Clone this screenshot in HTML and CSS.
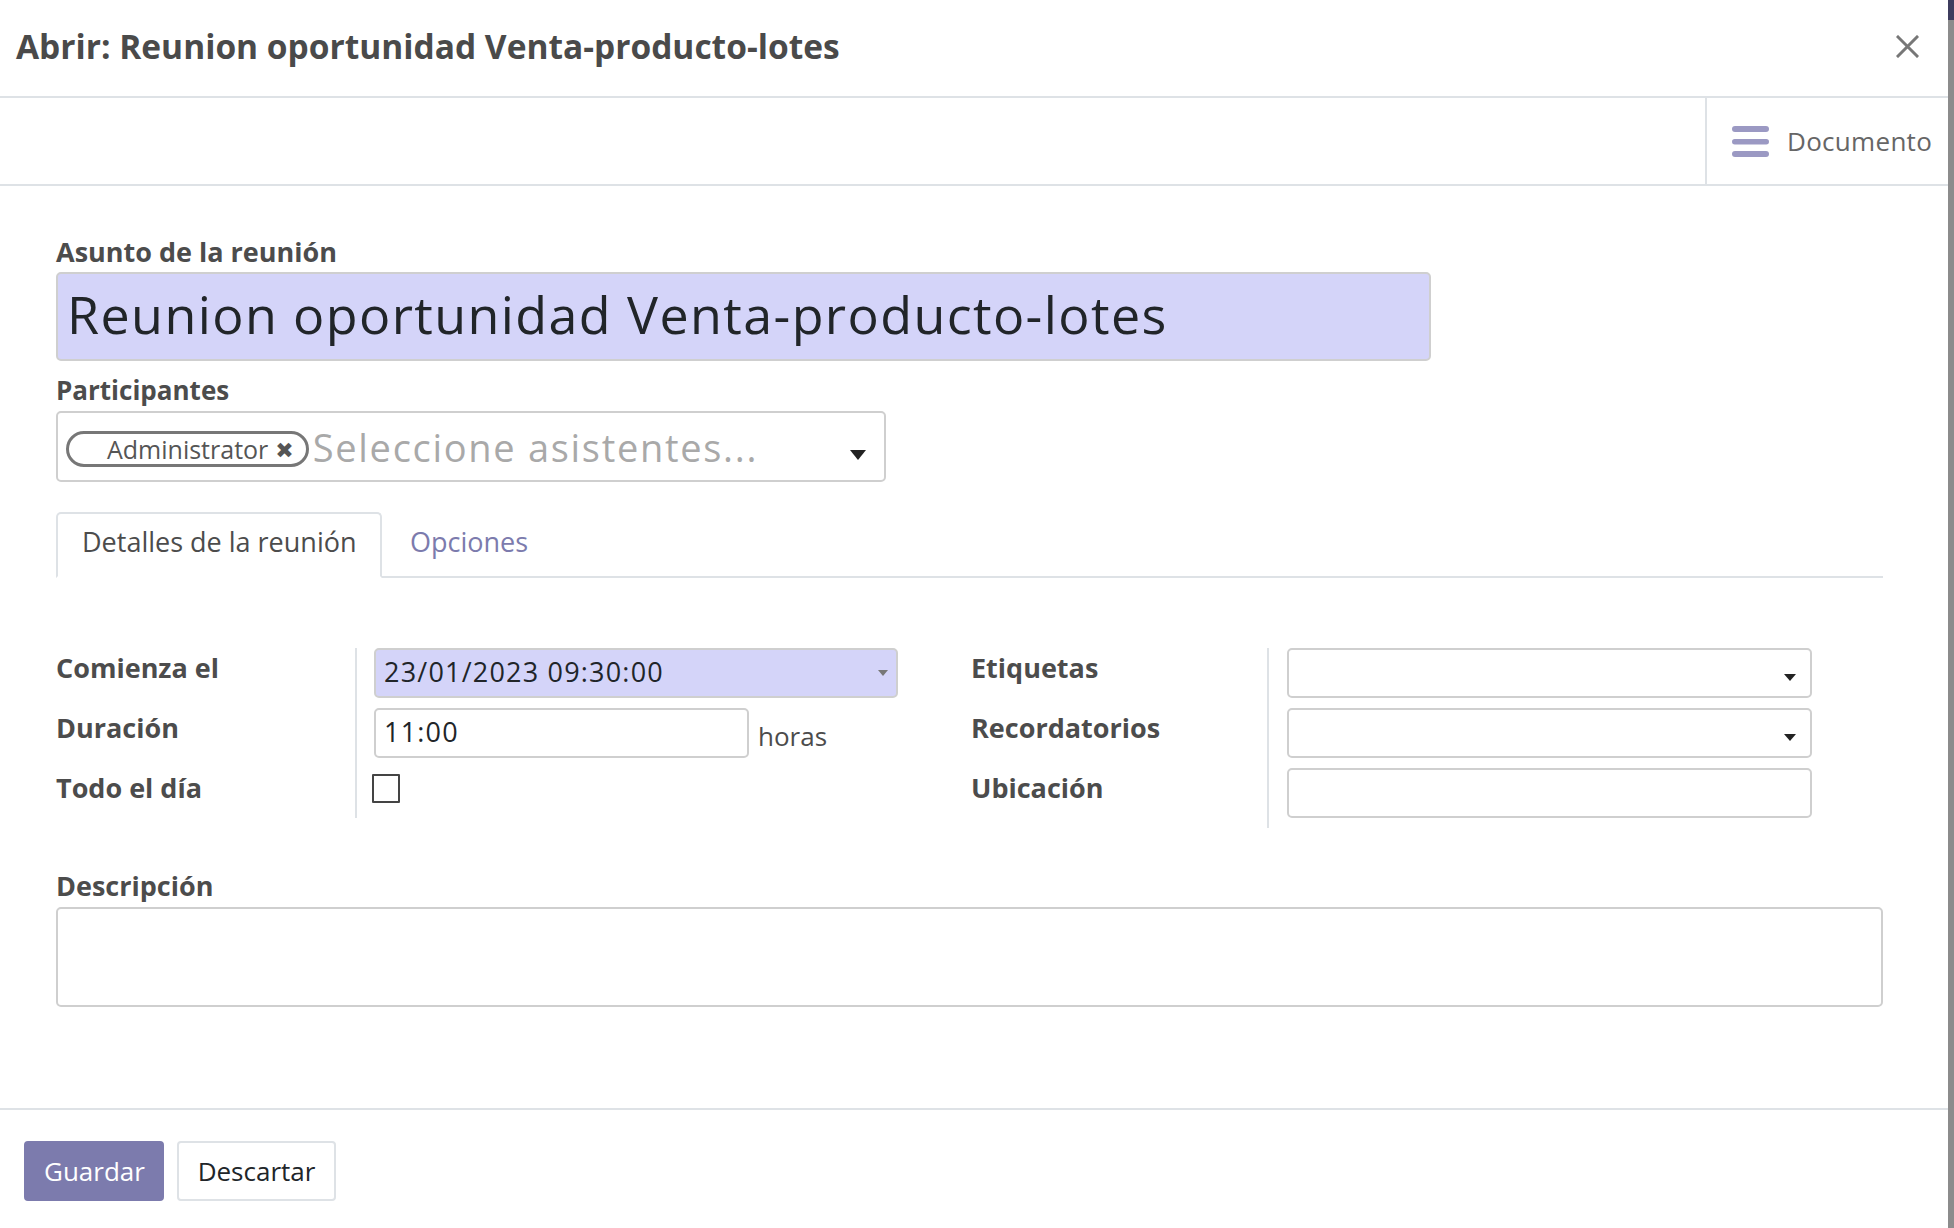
FILE: index.html
```html
<!DOCTYPE html>
<html lang="es">
<head>
<meta charset="utf-8">
<title>Abrir: Reunion oportunidad Venta-producto-lotes</title>
<link rel="stylesheet" href="styles.css">
</head>
<body>
<div class="page">
  <div class="modal">
    <header class="modal-header">
      <h4 class="modal-title">Abrir: Reunion oportunidad Venta-producto-lotes</h4>
      <button class="close" aria-label="Cerrar">
        <svg width="23" height="23" viewBox="0 0 23 23"><path d="M2 2 L21 21 M21 2 L2 21" stroke="#777" stroke-width="3" stroke-linecap="square"/></svg>
      </button>
    </header>
    <div class="control-bar">
      <div class="cp-left"></div>
      <div class="cp-right">
        <svg class="burger" width="37" height="31" viewBox="0 0 37 31"><rect x="0" y="0" width="37" height="6" rx="3" fill="#9b99c3"/><rect x="0" y="13" width="37" height="5.5" rx="2.75" fill="#9b99c3"/><rect x="0" y="25" width="37" height="6" rx="3" fill="#9b99c3"/></svg>
        <span class="doc-label">Documento</span>
      </div>
    </div>
    <main class="modal-body">
      <label class="field-label">Asunto de la reunión</label>
      <div class="input title-input required">Reunion oportunidad Venta-producto-lotes</div>

      <label class="field-label part-label">Participantes</label>
      <div class="input many2many">
        <span class="tag">Administrator <span class="tag-x">✖</span></span>
        <span class="placeholder">Seleccione asistentes...</span>
        <svg class="caret-big" width="16" height="10" viewBox="0 0 16 10"><path d="M0 0 H16 L8 10 Z" fill="#222"/></svg>
      </div>

      <nav class="tabs">
        <div class="tab active">Detalles de la reunión</div>
        <div class="tab">Opciones</div>
      </nav>

      <div class="groups">
        <div class="group">
          <div class="labels">
            <div class="lbl">Comienza el</div>
            <div class="lbl">Duración</div>
            <div class="lbl last">Todo el día</div>
          </div>
          <div class="fields">
            <div class="input small required date-input">23/01/2023 09:30:00
              <svg class="caret-sm" width="10" height="6" viewBox="0 0 10 6"><path d="M0 0 H10 L5 6 Z" fill="#777"/></svg>
            </div>
            <div class="dur-row">
              <div class="input small dur-input">11:00</div>
              <span class="unit">horas</span>
            </div>
            <div class="check-row"><span class="checkbox"></span></div>
          </div>
        </div>
        <div class="group right-group">
          <div class="labels">
            <div class="lbl">Etiquetas</div>
            <div class="lbl">Recordatorios</div>
            <div class="lbl">Ubicación</div>
          </div>
          <div class="fields">
            <div class="input small wide-input"><svg class="caret-md" width="12" height="7" viewBox="0 0 12 7"><path d="M0 0 H12 L6 7 Z" fill="#222"/></svg></div>
            <div class="input small wide-input"><svg class="caret-md" width="12" height="7" viewBox="0 0 12 7"><path d="M0 0 H12 L6 7 Z" fill="#222"/></svg></div>
            <div class="input small wide-input"></div>
          </div>
        </div>
      </div>

      <label class="field-label desc-label">Descripción</label>
      <div class="input textarea"></div>
    </main>
    <footer class="modal-footer">
      <button class="btn btn-primary">Guardar</button>
      <button class="btn btn-secondary">Descartar</button>
    </footer>
  </div>
  <div class="backdrop"></div>
</div>
</body>
</html>
```
FILE: styles.css
```css
* { box-sizing: border-box; }
html, body { margin: 0; padding: 0; }
body {
  font-family: "Open Sans", "Noto Sans", "DejaVu Sans", sans-serif;
  color: #4c4c4c;
  background: #fff;
}
.page {
  display: flex;
  width: 1954px;
  height: 1228px;
  overflow: hidden;
}
.modal {
  width: 1948px;
  height: 1228px;
  display: flex;
  flex-direction: column;
  background: #fff;
}
.backdrop {
  width: 6px;
  height: 1228px;
  background: linear-gradient(#3e3c5e 0, #3e3c5e 20px, #8c8c8c 20px, #8c8c8c 100%);
}

/* header */
.modal-header {
  height: 98px;
  border-bottom: 2px solid #dee2e6;
  display: flex;
  align-items: center;
  justify-content: space-between;
  padding: 0 29px 4px 16px;
}
.modal-title {
  margin: 0;
  font-size: 33.5px;
  font-weight: 700;
  color: #4a4a4a;
}
.close {
  border: 0;
  background: transparent;
  padding: 0;
  width: 23px;
  height: 23px;
  display: flex;
}

/* control bar */
.control-bar {
  height: 88px;
  border-bottom: 2px solid #dee2e6;
  display: flex;
}
.cp-left { flex: 1; }
.cp-right {
  width: 243px;
  border-left: 2px solid #dee2e6;
  display: flex;
  align-items: center;
  padding-left: 25px;
  gap: 18px;
}
.doc-label {
  font-size: 26px;
  color: #666;
  letter-spacing: 0.3px;
}

/* body */
.modal-body {
  flex: 1;
  padding: 48px 65px 0 56px;
  display: flex;
  flex-direction: column;
  align-items: flex-start;
}
.field-label {
  display: block;
  font-size: 27px;
  font-weight: 700;
  line-height: 36px;
  color: #4c4c4c;
}
.input {
  border: 2px solid #cfcfcf;
  border-radius: 5px;
  background: #fff;
  color: #212529;
}
.required { background: #d4d4f9; }
.title-input {
  width: 1375px;
  height: 89px;
  margin-top: 2px;
  font-size: 52px;
  letter-spacing: 1.4px;
  line-height: 80px;
  padding-left: 9px;
}
.part-label { margin-top: 11px; font-size: 26px; }
.many2many {
  width: 830px;
  height: 71px;
  margin-top: 3px;
  display: flex;
  align-items: center;
  padding-left: 8px;
  position: relative;
}
.tag {
  display: inline-flex;
  align-items: center;
  height: 36px;
  border: 3px solid #777;
  border-radius: 18px;
  padding: 0 12px 0 38px;
  font-size: 25px;
  color: #555;
  margin-top: 4px;
}
.tag-x {
  font-size: 22px;
  margin-left: 7px;
  color: #555;
}
.placeholder {
  font-size: 38px;
  color: #a9a9a9;
  margin-left: 4px;
  letter-spacing: 1.7px;
}
.caret-big {
  position: absolute;
  right: 18px;
  top: 37px;
}

/* tabs */
.tabs {
  margin-top: 30px;
  width: 1827px;
  display: flex;
  border-bottom: 2px solid #dee2e6;
  height: 66px;
}
.tab {
  height: 66px;
  padding: 0 20px 0 26px;
  font-size: 27px;
  line-height: 56px;
  color: #7c7bad;
  border: 2px solid transparent;
  border-radius: 5px 5px 0 0;
  margin-bottom: -2px;
}
.tab.active {
  color: #4c4c4c;
  border-color: #dee2e6;
  border-bottom-color: #fff;
  background: #fff;
  width: 326px;
  padding-left: 24px;
}

/* groups */
.groups {
  display: flex;
  margin-top: 70px;
  width: 1827px;
  align-items: flex-start;
}
.group {
  display: flex;
  width: 915px;
  align-items: flex-start;
}
.labels {
  width: 301px;
  border-right: 2px solid #dee2e6;
  display: flex;
  flex-direction: column;
}
.lbl {
  height: 60px;
  font-size: 27px;
  font-weight: 700;
  line-height: 40px;
  color: #4c4c4c;
}
.lbl.last { height: 50px; }
.fields {
  padding-left: 17px;
  display: flex;
  flex-direction: column;
  gap: 10px;
}
.input.small {
  height: 50px;
  font-size: 27px;
  line-height: 44px;
  padding-left: 8px;
  position: relative;
  letter-spacing: 1.2px;
}
.date-input { width: 524px; }
.caret-sm { position: absolute; right: 8px; top: 20px; }
.dur-row { display: flex; align-items: center; height: 50px; }
.dur-input { width: 375px; }
.unit {
  font-size: 26px;
  color: #4c4c4c;
  margin-left: 9px;
  margin-top: 6px;
}
.check-row { height: 40px; display: flex; align-items: flex-start; padding-top: 6px; }
.checkbox {
  width: 28px;
  height: 29px;
  border: 2px solid #444;
  border-radius: 1px;
  margin-left: -2px;
}
.right-group { width: 912px; }
.right-group .labels { width: 298px; }
.right-group .fields { padding-left: 18px; }
.wide-input { width: 525px; }
.caret-md { position: absolute; right: 14px; top: 24px; }

.desc-label { margin-top: 40px; }
.textarea {
  width: 1827px;
  height: 100px;
  margin-top: 3px;
}

/* footer */
.modal-footer {
  height: 120px;
  border-top: 2px solid #dee2e6;
  display: flex;
  align-items: flex-start;
  padding: 31px 0 0 24px;
  gap: 13px;
}
.btn {
  height: 60px;
  font-family: "Open Sans", "Noto Sans", sans-serif;
  font-size: 26px;
  border-radius: 4px;
  padding: 0 18px;
}
.btn-primary {
  width: 140px;
  background: #7c7bad;
  color: #fff;
  border: 2px solid #7c7bad;
}
.btn-secondary {
  width: 159px;
  background: #fff;
  color: #212529;
  border: 2px solid #dee2e6;
}
```
